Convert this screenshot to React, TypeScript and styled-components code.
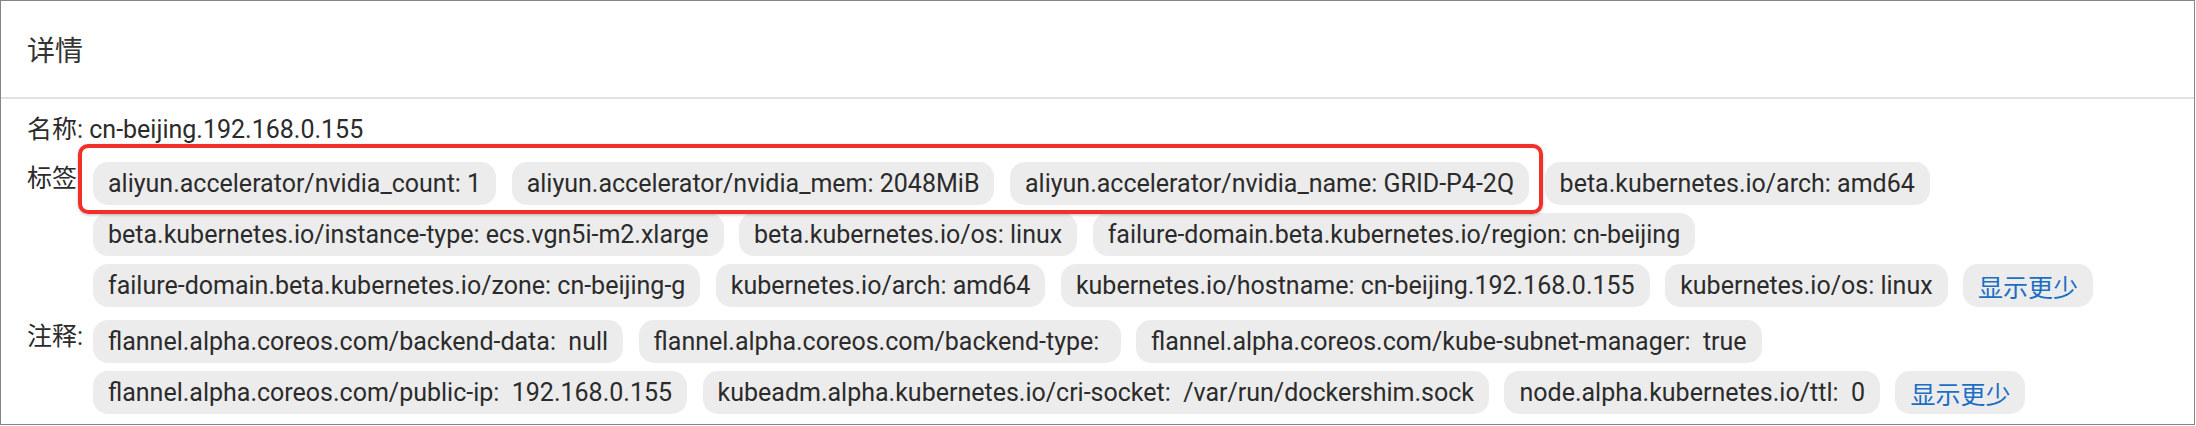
import React from "react";
import styled, { createGlobalStyle } from "styled-components";

const GlobalStyle = createGlobalStyle`
  html, body {
    margin: 0;
    padding: 0;
    background: #ffffff;
  }
  body {
    font-family: Roboto, "Noto Sans CJK SC", "Noto Sans", sans-serif;
    color: #2b2b2b;
  }
`;

const Card = styled.section`
  box-sizing: border-box;
  width: 2195px;
  height: 425px;
  border: 1px solid #858585;
  background: #ffffff;
  display: flex;
  flex-direction: column;
`;

const Header = styled.header`
  box-sizing: border-box;
  height: 98px;
  display: flex;
  align-items: center;
  padding-left: 26px;
  font-size: 28px;
  color: #333333;
  border-bottom: 2px solid #e2e2e2;
`;

const Body = styled.div`
  display: flex;
  flex-direction: column;
  padding: 14px 26px 0 26px;
  font-size: 25px;
`;

const NameRow = styled.div`
  line-height: 33px;
  margin-bottom: 16px;
`;

const FieldRow = styled.div<{ $gapAfter?: number }>`
  position: relative;
  display: grid;
  grid-template-columns: 66px 1fr;
  align-items: start;
  margin-bottom: ${(p) => p.$gapAfter ?? 0}px;
`;

const Label = styled.div`
  line-height: 33px;
  white-space: nowrap;
`;

const ChipList = styled.div`
  position: relative;
  display: flex;
  flex-wrap: wrap;
  gap: 8px 15.5px;
`;

const Chip = styled.span<{ $link?: boolean }>`
  box-sizing: border-box;
  display: inline-flex;
  align-items: center;
  height: 43px;
  padding: 0 15px;
  border-radius: 15px;
  background: #ececec;
  white-space: pre;
  color: ${(p) => (p.$link ? "#1c6ec4" : "#2b2b2b")};
`;

const Highlight = styled.div`
  position: absolute;
  left: -15px;
  top: -18px;
  width: 1465px;
  height: 70px;
  box-sizing: border-box;
  border: 4px solid #f1302a;
  border-radius: 10px;
  box-shadow: 0 1px 3px rgba(0, 0, 0, 0.25);
  pointer-events: none;
`;

const labels = [
  "aliyun.accelerator/nvidia_count: 1",
  "aliyun.accelerator/nvidia_mem: 2048MiB",
  "aliyun.accelerator/nvidia_name: GRID-P4-2Q",
  "beta.kubernetes.io/arch: amd64",
  "beta.kubernetes.io/instance-type: ecs.vgn5i-m2.xlarge",
  "beta.kubernetes.io/os: linux",
  "failure-domain.beta.kubernetes.io/region: cn-beijing",
  "failure-domain.beta.kubernetes.io/zone: cn-beijing-g",
  "kubernetes.io/arch: amd64",
  "kubernetes.io/hostname: cn-beijing.192.168.0.155",
  "kubernetes.io/os: linux",
];

const annotations = [
  "flannel.alpha.coreos.com/backend-data:  null",
  "flannel.alpha.coreos.com/backend-type: ",
  "flannel.alpha.coreos.com/kube-subnet-manager:  true",
  "flannel.alpha.coreos.com/public-ip:  192.168.0.155",
  "kubeadm.alpha.kubernetes.io/cri-socket:  /var/run/dockershim.sock",
  "node.alpha.kubernetes.io/ttl:  0",
];

export default function App() {
  return (
    <>
      <GlobalStyle />
      <Card>
        <Header>详情</Header>
        <Body>
          <NameRow>名称: cn-beijing.192.168.0.155</NameRow>
          <FieldRow $gapAfter={13}>
            <Label>标签</Label>
            <ChipList>
              <Highlight />
              {labels.map((t) => (
                <Chip key={t}>{t}</Chip>
              ))}
              <Chip $link>显示更少</Chip>
            </ChipList>
          </FieldRow>
          <FieldRow>
            <Label>注释:</Label>
            <ChipList>
              {annotations.map((t) => (
                <Chip key={t}>{t}</Chip>
              ))}
              <Chip $link>显示更少</Chip>
            </ChipList>
          </FieldRow>
        </Body>
      </Card>
    </>
  );
}
